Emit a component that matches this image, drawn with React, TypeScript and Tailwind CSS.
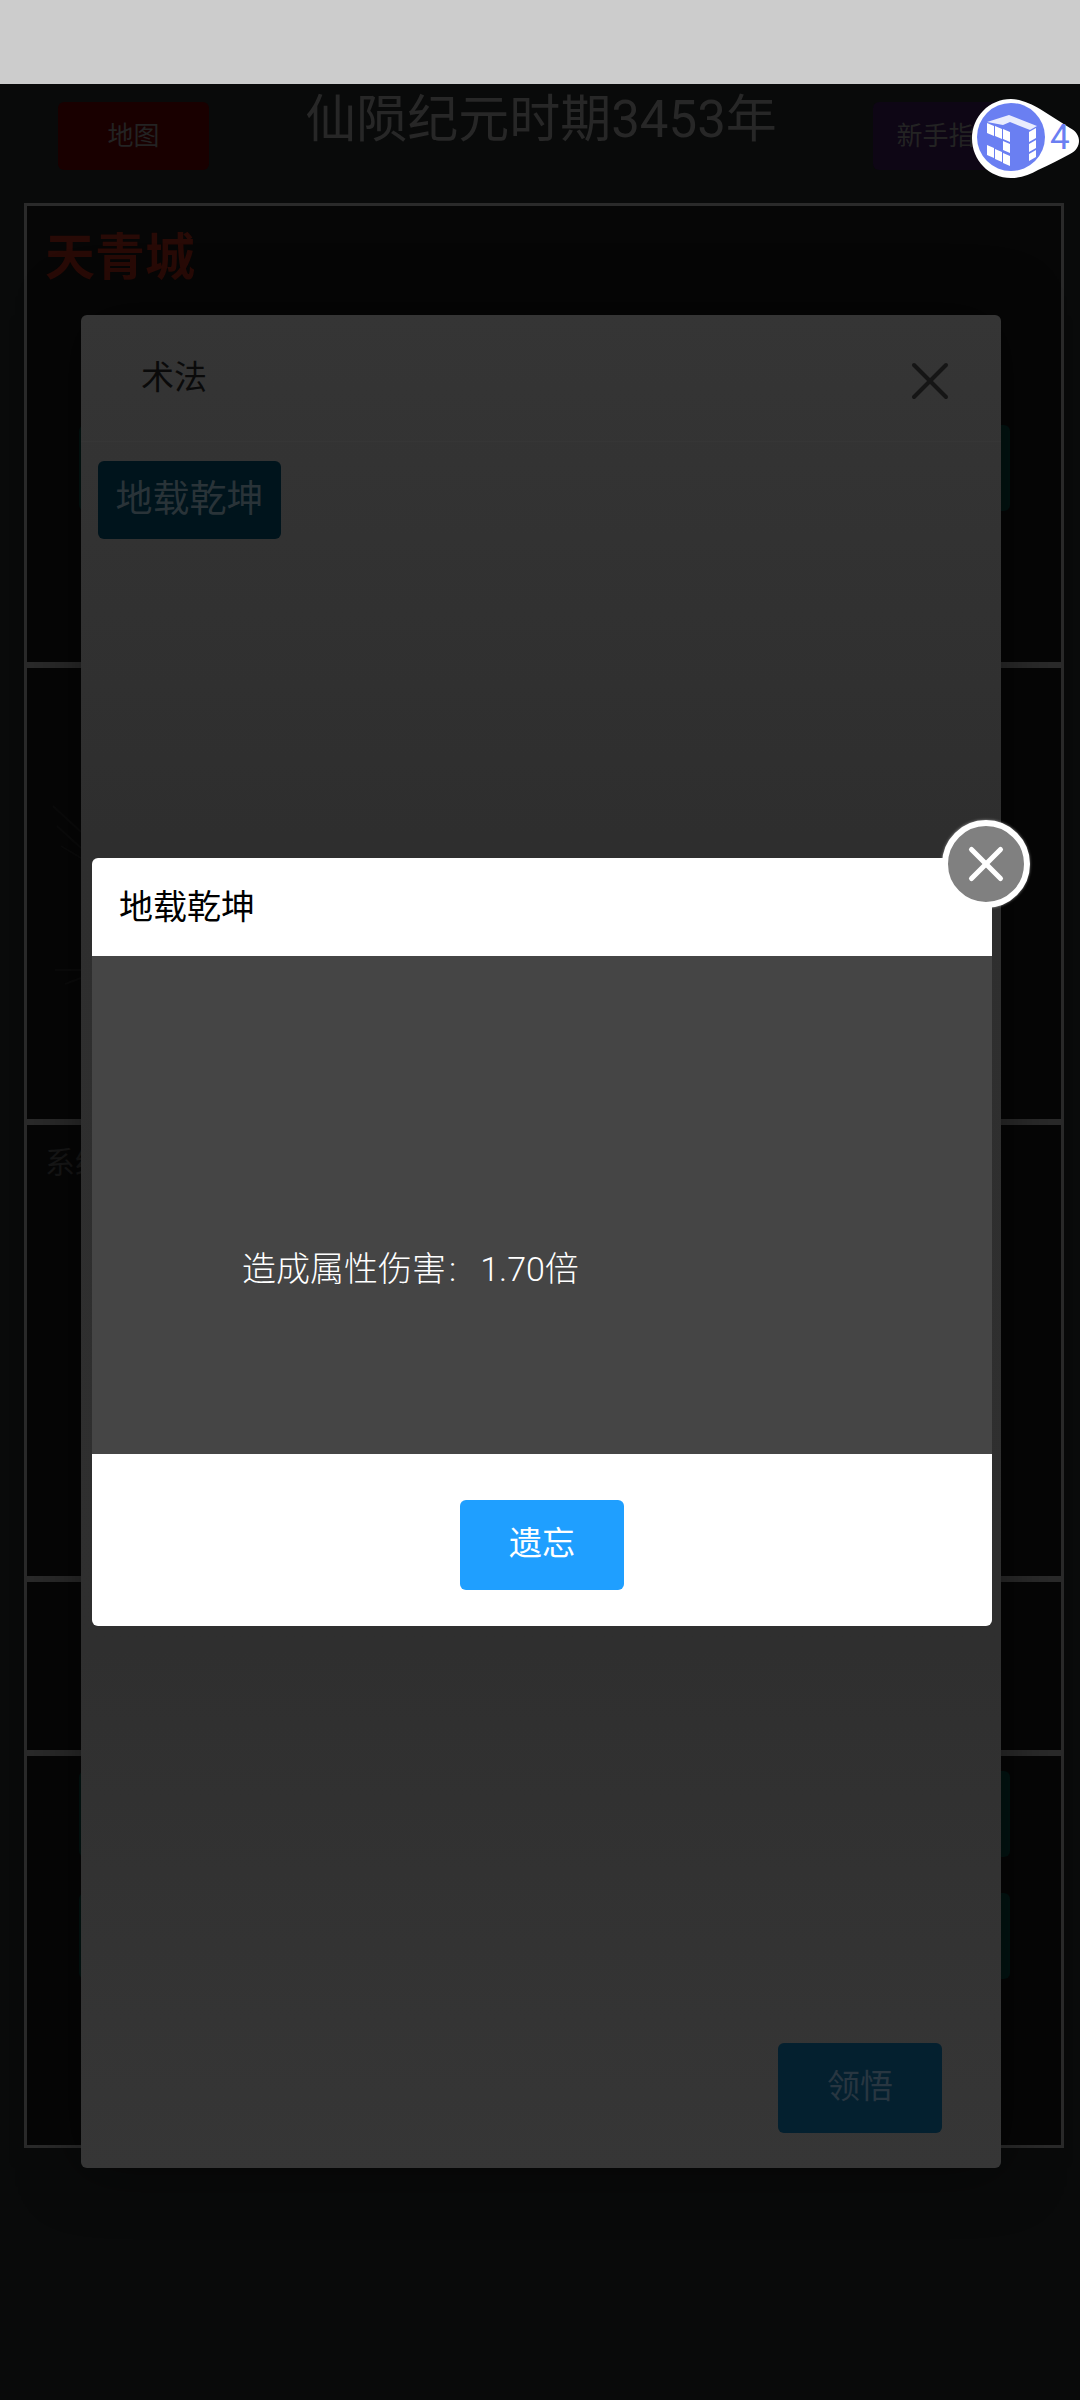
import React from 'react';
import { X } from 'lucide-react';

const cubeBlocks = [
  '17,28 24,31 24,41 17,38',
  '25,31 32,34 32,44 25,41',
  '33,34 40,37 40,47 33,44',
  '33,46 40,49 40,58 33,55',
  '17,50 24,53 24,63 17,60',
  '25,54 32,57 32,67 25,64',
  '33,58 40,61 40,71 33,68',
  '59,37 66,33 66,43 59,47',
  '59,49 66,45 66,53 59,57',
  '59,59 66,55 66,62 59,66',
];

// floating helper bubble, top right
const FloatBubble = () => (
  <div className="absolute left-[970px] top-[95px] w-[110px] h-[85px]">
    <svg width="110" height="85" viewBox="0 0 110 85">
      <path d="M41 4 C50 4 62 9 70 14 L100 33 C112 39 112 53 100 59 C90 64 80 70 68 75 C60 80 50 83 41 83 C19 83 2 65 2 43.500 C2 22 19 4 41 4 Z" fill="#ffffff" />
      <circle cx="41" cy="42" r="34" fill="#6a7ff2" />
      <polygon points="17,27 39,20 67,31 60,35 40,27 33,30" fill="#ffffff" opacity="0.85" />
      {cubeBlocks.map((pts) => (
        <polygon key={pts} points={pts} fill="#ffffff" />
      ))}
    </svg>
    <span className="absolute left-[80px] top-[23px] text-[35px] leading-[40px] text-[#6a7ff2]">4</span>
  </div>
);

const TealBar = () => <div className="ml-[52px] w-[931px] h-[86px] rounded-md bg-[#021412]" />;

export default function App() {
  return (
    <div className="relative w-[1080px] h-[2400px] overflow-hidden bg-[#090a0a] font-['Roboto','Noto_Sans_CJK_SC',sans-serif]">
      <div className="h-[84px] bg-[#cccccc]" />

      {/* page header, dimmed by the mask */}
      <div className="h-[119px] pl-[58px] pr-[56px] pt-[18px] flex justify-between items-start">
        <div className="w-[151px] h-[68px] rounded-md bg-[#190000] flex items-center justify-center text-[26px] text-[#232323]">地图</div>
        <div className="-mt-[7px] text-[51px] leading-[50px] text-[#272727]">仙陨纪元时期3453年</div>
        <div className="w-[151px] h-[68px] rounded-md bg-[#0e0615] flex items-center justify-center text-[26px] text-[#232323]">新手指南</div>
      </div>

      <div className="ml-[24px] w-[1040px] h-[1945px] border-[3px] border-[#2a2a2a] bg-[#060606] flex flex-col">
        <section className="h-[462px] border-b-[6px] border-[#2a2a2a] pt-[27px]">
          <div className="pl-[18px] text-[50px] leading-[50px] font-bold text-[#280a06]">天青城</div>
          <div className="mt-[142px]">
            <TealBar />
          </div>
        </section>
        <section className="relative h-[457px] border-b-[6px] border-[#2a2a2a]">
          <svg className="absolute left-[18px] top-[130px]" width="40" height="190" viewBox="0 0 40 190" fill="none" stroke="#0b0b0b" strokeWidth="2">
            <path d="M8 8 L36 34 M12 28 L36 50 M16 48 L36 60 M10 172 L36 172 M20 186 L36 180" />
          </svg>
        </section>
        <section className="h-[457px] border-b-[6px] border-[#2a2a2a] pt-[21px] pl-[18px]">
          <div className="text-[30px] leading-[34px] text-[#171717]">系统</div>
        </section>
        <section className="h-[174px] border-b-[6px] border-[#2a2a2a]" />
        <section className="flex-1 pt-[15px] flex flex-col gap-[36px]">
          <TealBar />
          <TealBar />
        </section>
      </div>

      {/* first dialog: 术法 */}
      <div className="absolute left-[81px] top-[315px] w-[920px] h-[1853px] rounded-md flex flex-col shadow-[0_0_60px_rgba(0,0,0,0.5)] bg-[linear-gradient(180deg,#353535_0%,#2e2e2e_28%,#2f2f2f_72%,#363636_100%)]">
        <div className="h-[127px] shrink-0 border-b border-[#363636] pl-[60px] pr-[39px] flex items-center justify-between">
          <span className="text-[33px] text-[#0a0a0a] -mt-[1px]">术法</span>
          <X size={64} strokeWidth={1.5} className="text-[#151515] mt-[5px]" />
        </div>
        <div className="pl-[17px] pt-[19px]">
          <div className="w-[183px] h-[78px] rounded-md bg-[#00141c] flex items-center justify-center text-[37px] text-[#293338]">地载乾坤</div>
        </div>
        <div className="mt-auto self-end mr-[59px] mb-[35px] w-[164px] h-[90px] pb-[2px] rounded-md bg-[#04202f] flex items-center justify-center text-[33px] text-[#283641]">领悟</div>
      </div>

      {/* second dialog: skill detail */}
      <div className="absolute left-[92px] top-[858px] w-[900px] rounded-md overflow-hidden flex flex-col">
        <div className="h-[98px] bg-white pl-[27px] flex items-center text-[34px] text-black">地载乾坤</div>
        <div className="h-[498px] bg-[#454545] pl-[150px] pt-[293px] text-[34px] leading-[40px] font-light text-white">
          造成属性伤害<span className="ml-[3px] mr-[24px]">:</span>1.70倍
        </div>
        <div className="h-[172px] bg-white pt-[46px] flex justify-center items-start">
          <div className="w-[164px] h-[90px] pb-[2px] rounded-md bg-[#1f9fff] flex items-center justify-center text-[33px] text-white">遗忘</div>
        </div>
      </div>

      <div className="absolute left-[942px] top-[820px] w-[88px] h-[88px] rounded-full border-[6px] border-white bg-[#808080] flex items-center justify-center shadow-[0_0_3px_rgba(255,255,255,0.5)]">
        <X size={58} strokeWidth={2.1} className="text-white" />
      </div>

      <FloatBubble />
    </div>
  );
}
